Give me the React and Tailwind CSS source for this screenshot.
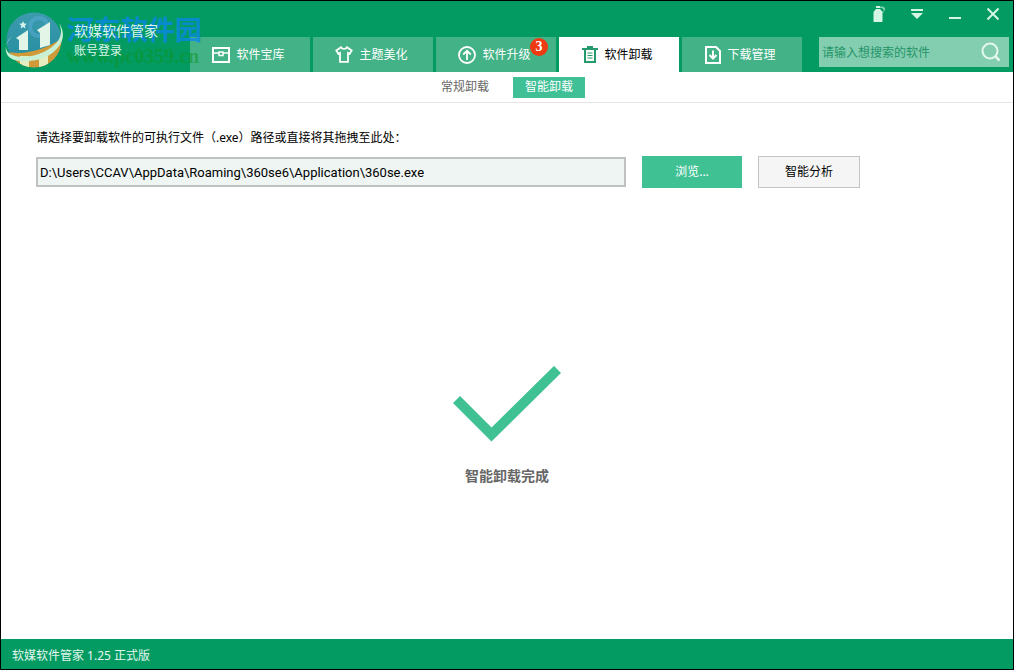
import React, { useState } from "react";

function ChestIcon() {
  return (
    <svg width="18" height="16" viewBox="0 0 18 16" fill="none" stroke="currentColor" strokeWidth="2" aria-hidden="true">
      <path d="M1 15V1h16v14z" />
      <path d="M1 6h6M11 6h6" strokeWidth="1.500" />
      <rect x="7" y="5" width="4" height="3.500" strokeWidth="1.500" />
    </svg>
  );
}

function ShirtIcon() {
  return (
    <svg width="18" height="17" viewBox="0 0 18 17" fill="none" stroke="currentColor" strokeWidth="1.8" aria-hidden="true">
      <path d="M6 1.200L1.300 4.500l2 3.300L5 7v8.900h8V7l1.700.8 2-3.300L12 1.200C11.200 3.400 6.800 3.400 6 1.200z" />
    </svg>
  );
}

function UpgradeIcon() {
  return (
    <svg width="18" height="18" viewBox="0 0 18 18" fill="none" stroke="currentColor" strokeWidth="1.800" aria-hidden="true">
      <circle cx="9" cy="9" r="8" />
      <path d="M9 14V5M5.200 8.500L9 4.800l3.800 3.700" />
    </svg>
  );
}

function TrashIcon() {
  return (
    <svg width="16" height="17" viewBox="0 0 16 17" fill="none" stroke="#259a6c" strokeWidth="2" aria-hidden="true">
      <path d="M0 3h16M5 1h6" />
      <path d="M3 3v13h10V3" />
      <path d="M5.500 7h5M5.500 9.500h5M5.500 12h5" strokeWidth="1.200" />
    </svg>
  );
}

function DownloadIcon() {
  return (
    <svg width="16" height="18" viewBox="0 0 16 18" fill="none" stroke="currentColor" strokeWidth="2" aria-hidden="true">
      <path d="M1 1h10l4 4v12H1z" />
      <path d="M8 4.500v8M4.500 9L8 12.500 11.500 9" />
    </svg>
  );
}

function Logo() {
  return (
    <svg width="58" height="58" viewBox="0 0 58 58" className="shrink-0" aria-hidden="true">
      <defs>
        <clipPath id="globe"><circle cx="29" cy="29" r="27.500" /></clipPath>
        <linearGradient id="sky" x1="0" y1="0" x2="0" y2="1">
          <stop offset="0" stopColor="#3d9cae" />
          <stop offset="1" stopColor="#218b9e" />
        </linearGradient>
      </defs>
      <g clipPath="url(#globe)">
        <rect width="58" height="58" fill="url(#sky)" />
        <path d="M0 40C16 46 44 38 58 26v32H0z" fill="#d19a38" />
        <circle cx="34" cy="16" r="9" fill="none" stroke="#55a9d0" strokeWidth="4" opacity="0.6" />
        <path d="M11 27l12-8v20H14V29zM32 19l13-8v23l-10 3V22z" fill="#e2f5e6" />
        <path d="M15 45h9v13h-9zM34 43l9-3v18h-9z" fill="#e6edc0" />
      </g>
      <path d="M12 21C3 27-1 35 2 40c5 8 27 8 42-2 10-7 15-14 10-26 8 12 3 23-8 31C34 51 12 53 4 46c-7-7-2-18 8-25z" fill="#c8f0d4" />
      <path d="M18 10l1.200 2.600 2.800.2-2.100 1.800.7 2.800-2.500-1.500-2.500 1.500.7-2.800-2.100-1.800 2.800-.2z" fill="#d5f3ee" />
    </svg>
  );
}

const tabs = [
  { label: "软件宝库", Icon: ChestIcon },
  { label: "主题美化", Icon: ShirtIcon },
  { label: "软件升级", Icon: UpgradeIcon, badge: 3 },
  { label: "软件卸载", Icon: TrashIcon },
  { label: "下载管理", Icon: DownloadIcon },
];

function WindowControls() {
  return (
    <div className="flex h-9 items-start justify-end gap-3.5 pt-px pr-2 text-[#d5f5e5]">
      <button type="button" aria-label="皮肤" className="flex h-6 w-6 items-center justify-center">
        <svg width="14" height="18" viewBox="0 0 14 18" fill="currentColor" aria-hidden="true">
          <path d="M4 1h4v2H4zM4 4h4l2.500 3v9.500l-.5.500H2l-.5-.5V7z" />
          <path d="M8 1.500h3l2 1.500v2l-1 1-1-2-1-1H8zM10 6.500h2v1h-2z" opacity="0.6" />
        </svg>
      </button>
      <button type="button" aria-label="菜单" className="flex h-6 w-6 items-center justify-center">
        <svg width="12" height="10" viewBox="0 0 12 10" fill="currentColor" aria-hidden="true">
          <path d="M0 0h12v2H0zM0 4h12L6 10z" />
        </svg>
      </button>
      <button type="button" aria-label="最小化" className="flex h-6 w-6 items-center justify-center">
        <svg width="12" height="10" viewBox="0 0 12 10" fill="currentColor" aria-hidden="true">
          <path d="M0 8h12v2H0z" />
        </svg>
      </button>
      <button type="button" aria-label="关闭" className="flex h-6 w-6 items-center justify-center">
        <svg width="12" height="12" viewBox="0 0 12 12" fill="none" stroke="currentColor" strokeWidth="2" aria-hidden="true">
          <path d="M.5.5l11 11M11.500.5l-11 11" />
        </svg>
      </button>
    </div>
  );
}

function Header({ active, onSelect }) {
  return (
    <header className="relative flex bg-[#039b62]">
      <div className="flex w-[189px] shrink-0 items-center gap-[11px] pt-1.5 pl-1">
        <Logo />
        <div className="relative z-10 flex flex-col items-start pt-0.5 text-[#d9f6e8]">
          <span className="text-sm leading-5">软媒软件管家</span>
          <a href="#login" className="text-xs leading-5">账号登录</a>
        </div>
      </div>
      <div className="flex min-w-0 flex-1 flex-col">
        <WindowControls />
        <div className="flex items-start">
          <nav className="flex shrink-0 gap-[3px]">
            {tabs.map(({ label, Icon, badge }, i) => (
              <button
                key={label}
                type="button"
                onClick={() => onSelect(i)}
                className={
                  i === active
                    ? "relative flex h-[35px] w-[120px] items-center justify-center gap-1.5 bg-white pr-[3px] text-xs text-black"
                    : "relative flex h-[35px] w-[120px] items-center justify-center gap-1.5 bg-[#43b387] pr-[3px] text-xs text-white"
                }
              >
                <Icon />
                {label}
                {badge && (
                  <span className="absolute top-px right-2 flex h-[18px] w-[18px] items-center justify-center rounded-full bg-[#ee3a10] font-['Liberation_Serif',serif] text-sm font-bold text-white">
                    {badge}
                  </span>
                )}
              </button>
            ))}
          </nav>
          <form role="search" onSubmit={(e) => e.preventDefault()} className="mr-1 ml-[17px] flex h-[30px] min-w-0 flex-1 items-center bg-[#83cdb0] pr-2 pl-[3px]">
            <input
              type="text"
              aria-label="搜索软件"
              placeholder="请输入想搜索的软件"
              className="min-w-0 flex-1 bg-transparent pt-0.5 text-xs text-[#0d7a50] outline-none placeholder:text-[#259568]"
            />
            <button type="submit" aria-label="搜索" className="text-[#e3f7ee]">
              <svg width="20" height="20" viewBox="0 0 20 20" fill="none" stroke="currentColor" strokeWidth="2" aria-hidden="true">
                <circle cx="9" cy="9" r="7.500" />
                <path d="M14.500 14.500l4 4" strokeWidth="2.500" />
              </svg>
            </button>
          </form>
        </div>
      </div>
      <div className="pointer-events-none absolute top-[11px] left-[66px] flex flex-col font-bold whitespace-nowrap">
        <span className="text-[27px] leading-9 text-[#0a86ee]/75">河东软件园</span>
        <span className="font-['Liberation_Serif',serif] text-xl leading-4 text-[#0b9420]/50">www.pc0359.cn</span>
      </div>
    </header>
  );
}

export default function App() {
  const [active, setActive] = useState(3);
  const [path, setPath] = useState("D:\\Users\\CCAV\\AppData\\Roaming\\360se6\\Application\\360se.exe");

  return (
    <div className="flex min-h-screen flex-col border border-black bg-white font-['Noto_Sans','Noto_Sans_CJK_SC',sans-serif] text-xs text-black">
      <Header active={active} onSelect={setActive} />
      <nav className="flex h-[31px] items-center justify-center border-b border-[#e4e4e4]">
        <button type="button" className="h-[21px] w-[72px] text-[#666]">常规卸载</button>
        <button type="button" className="ml-3 h-[21px] w-[72px] bg-[#3fc096] text-white">智能卸载</button>
      </nav>
      <main className="flex flex-1 flex-col px-[35px] pt-[25px]">
        <label htmlFor="path" className="leading-5">请选择要卸载软件的可执行文件（.exe）路径或直接将其拖拽至此处：</label>
        <div className="mt-2 flex items-center gap-4">
          <input
            id="path"
            type="text"
            value={path}
            onChange={(e) => setPath(e.target.value)}
            className="h-[30px] w-[590px] min-w-0 border-2 border-[#bfc2c1] bg-[#eef5f3] px-0.5 font-['Roboto',sans-serif] text-[13px] outline-none"
          />
          <button type="button" className="h-8 w-[100px] shrink-0 bg-[#3fc193] text-white">浏览...</button>
          <button type="button" className="h-8 w-[102px] shrink-0 border border-[#c4c4c4] bg-[#f5f5f5]">智能分析</button>
        </div>
        <div className="flex flex-1 flex-col items-center justify-center gap-6 pt-6">
          <svg width="108" height="76" viewBox="0 0 108 76" fill="none" stroke="#3fc193" strokeWidth="10" aria-hidden="true">
            <path d="M3.500 33.500L38.500 68.500 104.500 3.500" />
          </svg>
          <p className="text-sm leading-5 font-bold text-[#666]">智能卸载完成</p>
        </div>
      </main>
      <footer className="flex h-[30px] items-center bg-[#039b62] px-[11px] pt-1 text-[#e2f7ee]">软媒软件管家 1.25 正式版</footer>
    </div>
  );
}
